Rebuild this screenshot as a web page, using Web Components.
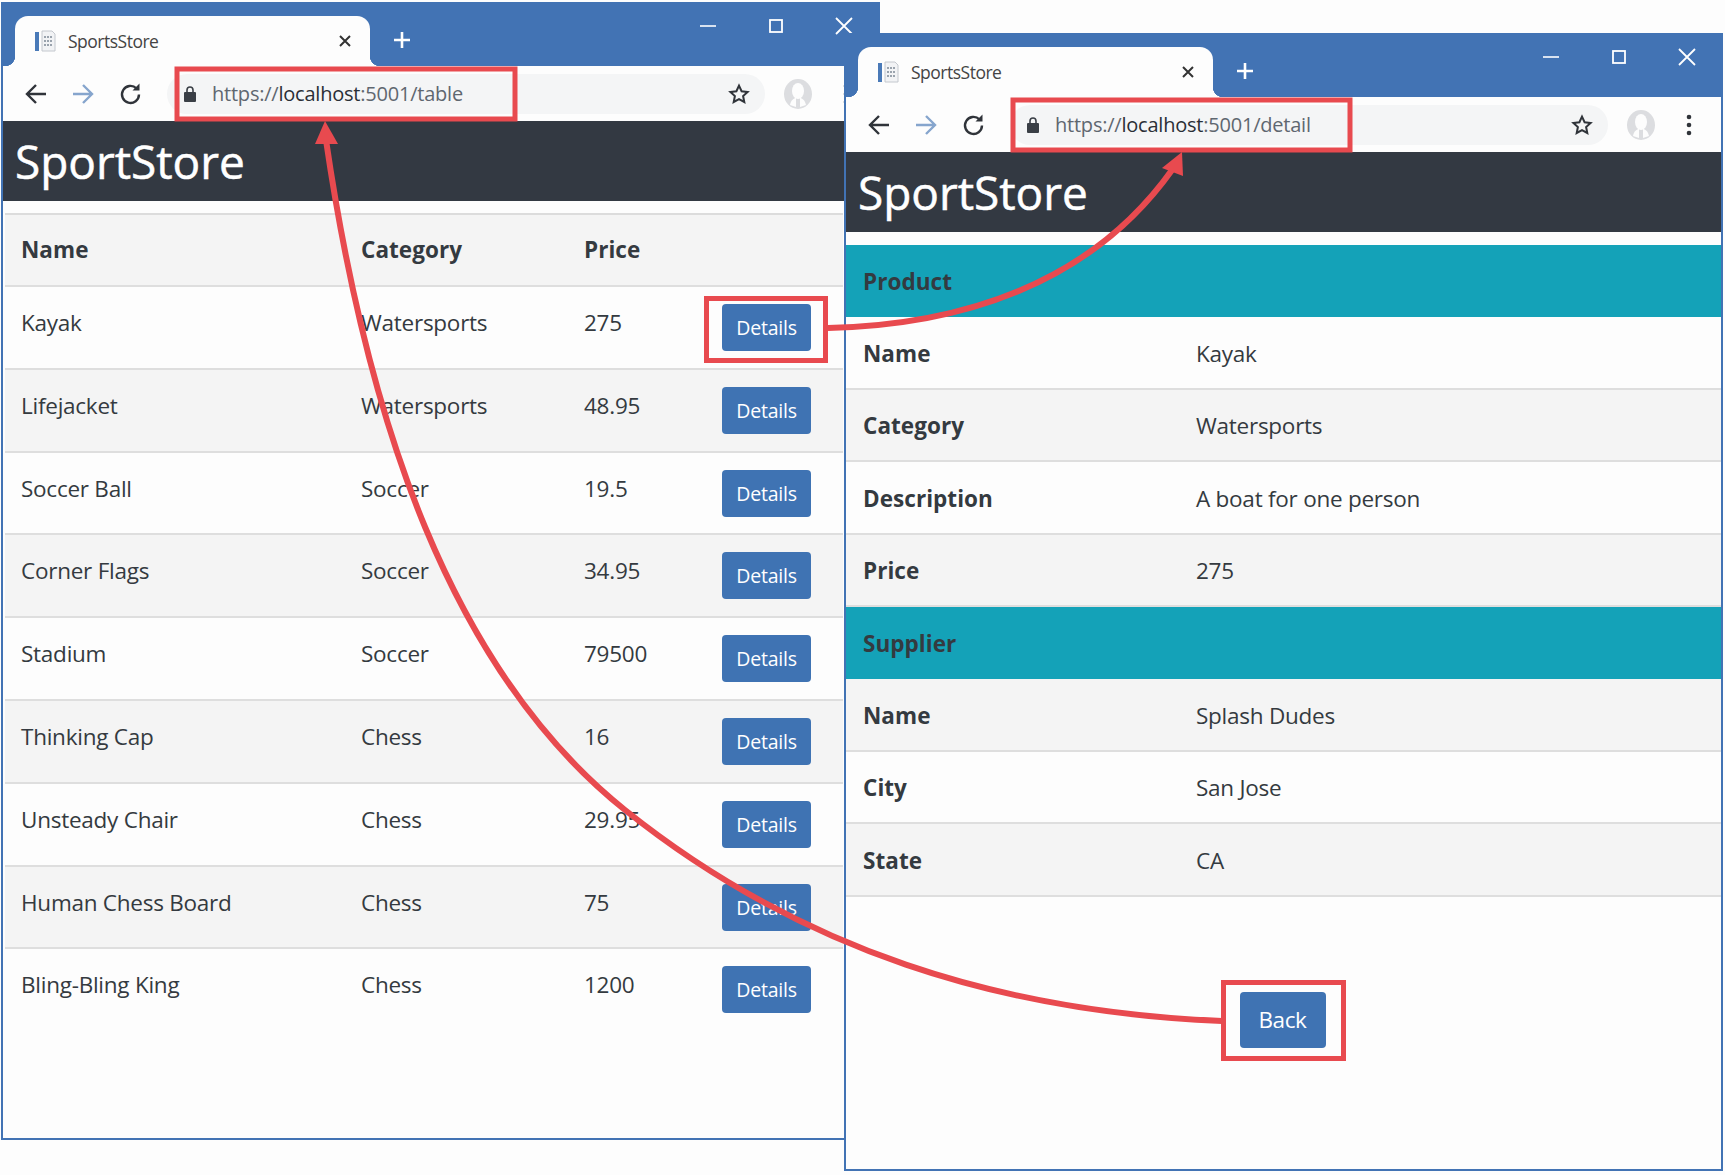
<!DOCTYPE html>
<html>
<head>
<meta charset="utf-8">
<title>SportsStore</title>
<style>
  html, body { margin: 0; background: #fdfdfd; }
  body { position: relative; width: 1725px; height: 1175px; overflow: hidden; font-family: "Open Sans", "Noto Sans", sans-serif; color: #343a40; }
</style>
</head>
<body>

<browser-window url-path="/table" style="left:1px;top:2px;width:879px;height:1138px;">
  <store-header></store-header>
  <div style="height:12px"></div>
  <product-table>
    <product-row head name="Name" cat="Category" price="Price"></product-row>
    <product-row name="Kayak" cat="Watersports" price="275"></product-row>
    <product-row shade name="Lifejacket" cat="Watersports" price="48.95"></product-row>
    <product-row name="Soccer Ball" cat="Soccer" price="19.5"></product-row>
    <product-row shade name="Corner Flags" cat="Soccer" price="34.95"></product-row>
    <product-row name="Stadium" cat="Soccer" price="79500"></product-row>
    <product-row shade name="Thinking Cap" cat="Chess" price="16"></product-row>
    <product-row name="Unsteady Chair" cat="Chess" price="29.95"></product-row>
    <product-row shade name="Human Chess Board" cat="Chess" price="75"></product-row>
    <product-row name="Bling-Bling King" cat="Chess" price="1200"></product-row>
  </product-table>
</browser-window>

<browser-window url-path="/detail" style="left:844px;top:33px;width:879px;height:1138px;">
  <store-header></store-header>
  <div style="height:13px"></div>
  <detail-row band label="Product"></detail-row>
  <detail-row label="Name" value="Kayak"></detail-row>
  <detail-row shade label="Category" value="Watersports"></detail-row>
  <detail-row label="Description" value="A boat for one person"></detail-row>
  <detail-row shade label="Price" value="275"></detail-row>
  <detail-row band label="Supplier"></detail-row>
  <detail-row shade label="Name" value="Splash Dudes"></detail-row>
  <detail-row label="City" value="San Jose"></detail-row>
  <detail-row shade label="State" value="CA"></detail-row>
  <back-bar></back-bar>
</browser-window>

<arrow-layer></arrow-layer>

<template id="window-tpl">
  <style>
    :host { display: flex; flex-direction: column; position: absolute; box-sizing: border-box; border: 2px solid #4273b4; border-top: 0; background: #fdfdfd; }
    .title { display: flex; height: 64px; background: #4273b4; box-sizing: border-box; padding-top: 14px; padding-left: 12px; flex: none; }
    .tab { position: relative; display: flex; align-items: center; width: 355px; height: 50px; box-sizing: border-box; padding: 0 18px 0 18px; background: #fdfdfd; border-radius: 13px 13px 0 0; font-size: 17.5px; letter-spacing: -.5px; color: #444; }
    .tab::before, .tab::after { content: ""; position: absolute; bottom: 0; width: 10px; height: 10px; }
    .tab::before { left: -10px; background: radial-gradient(circle at 0 0, #4273b4 10px, #fdfdfd 10.5px); }
    .tab::after { right: -10px; background: radial-gradient(circle at 100% 0, #4273b4 10px, #fdfdfd 10.5px); }
    .fav { margin-right: 11px; }
    .tab span { flex: 1; }
    .plus { margin: 14px 0 0 22px; }
    .ctrls { margin-left: auto; display: flex; width: 204px; }
    .ctrls svg { width: 68px; height: 24px; margin-top: -2px; }
    .bar { display: flex; align-items: center; height: 55px; flex: none; padding-left: 10px; box-sizing: border-box; background: #fdfdfd; }
    .nav { width: 47px; height: 28px; flex: none; }
    .omni { display: flex; align-items: center; width: 598px; height: 40px; margin-left: 13px; box-sizing: border-box; padding: 0 15px 0 17px; border-radius: 20px; background: #f4f5f6; font-size: 20px; letter-spacing: -.22px; color: #5f6770; }
    .omni b { font-weight: 400; color: #2a2f36; }
    .lock { margin-right: 16px; flex: none; }
    .star { margin-left: auto; flex: none; }
    .avatar { margin-left: 19px; flex: none; }
    .kebab { margin-left: 31px; flex: none; }
    .page { flex: 1; display: flex; flex-direction: column; min-height: 0; }
  </style>
  <div class="title">
    <div class="tab">
      <svg class="fav" width="24" height="24" viewBox="0 0 24 24"><path d="M9 2h10l3 3v17H9z" fill="#f2f3f5" stroke="#c4c8ce"/><rect x="2" y="3" width="4" height="19" fill="#4a7ab8"/><path d="M11 8h8M11 12h8M11 16h8" stroke="#9aa3ad" stroke-width="2" stroke-dasharray="2 1"/></svg>
      <span>SportsStore</span>
      <svg width="14" height="14" viewBox="0 0 14 14"><path d="M2 2l10 10M12 2L2 12" stroke="#333" stroke-width="2"/></svg>
    </div>
    <svg class="plus" width="20" height="20" viewBox="0 0 20 20"><path d="M10 2v16M2 10h16" stroke="#fff" stroke-width="2.6"/></svg>
    <div class="ctrls">
      <svg viewBox="0 0 68 24"><path d="M26 12h16" stroke="#fff" stroke-width="1.6"/></svg>
      <svg viewBox="0 0 68 24"><rect x="28" y="6" width="12" height="12" fill="none" stroke="#fff" stroke-width="1.8"/></svg>
      <svg viewBox="0 0 68 24"><path d="M26 4l16 16M42 4L26 20" stroke="#fff" stroke-width="1.8"/></svg>
    </div>
  </div>
  <div class="bar">
    <svg class="nav" viewBox="0 0 47 28"><path d="M33 14H15M23 5l-9 9 9 9" fill="none" stroke="#30343a" stroke-width="2.4"/></svg>
    <svg class="nav" viewBox="0 0 47 28"><path d="M13 14h18M23 5l9 9-9 9" fill="none" stroke="#86a5cd" stroke-width="2.4"/></svg>
    <svg class="nav" viewBox="0 0 47 28"><path d="M32 14.5a8.5 8.5 0 1 1-2.6-6.2" fill="none" stroke="#30343a" stroke-width="2.4"/><path d="M32.500 3.500v7h-7z" fill="#30343a"/></svg>
    <div class="omni">
      <svg class="lock" width="12" height="16" viewBox="0 0 12 16"><rect x="0" y="6" width="12" height="10" rx="1" fill="#3a3f46"/><path d="M3 6.5V4a3 3 0 0 1 6 0v2.5" fill="none" stroke="#3a3f46" stroke-width="1.6"/></svg>
      <div>https://<b>localhost</b><span id="path"></span></div>
      <svg class="star" width="22" height="22" viewBox="0 0 22 22"><path d="M11 2.6l2.6 5.6 6 .7-4.5 4.1 1.2 6L11 16.100l-5.300 2.900 1.200-6L2.400 8.900l6-.7z" fill="none" stroke="#30343a" stroke-width="2"/></svg>
    </div>
    <svg class="avatar" width="28" height="30" viewBox="0 0 28 30"><ellipse cx="14" cy="15" rx="14" ry="15" fill="#dcdde0"/><ellipse cx="14" cy="12" rx="6" ry="8" fill="#fdfdfd"/><path d="M6 26c1-5 4-7 6-7v9zM22 26c-1-5-4-7-6-7v9z" fill="#fdfdfd"/></svg>
    <svg class="kebab" width="6" height="22" viewBox="0 0 6 22"><circle cx="3" cy="3" r="2.300" fill="#30343a"/><circle cx="3" cy="11" r="2.300" fill="#30343a"/><circle cx="3" cy="19" r="2.300" fill="#30343a"/></svg>
  </div>
  <div class="page"><slot></slot></div>
</template>

<script>
function shadowFrom(el, html) {
  el.attachShadow({mode: 'open'});
  el.shadowRoot.innerHTML = html;
}

class BrowserWindow extends HTMLElement {
  constructor() {
    super();
    this.attachShadow({mode: 'open'});
    this.shadowRoot.appendChild(document.getElementById('window-tpl').content.cloneNode(true));
  }
  connectedCallback() {
    this.shadowRoot.querySelector('#path').textContent = ':5001' + this.getAttribute('url-path');
  }
}
customElements.define('browser-window', BrowserWindow);

class StoreHeader extends HTMLElement {
  constructor() {
    super();
    shadowFrom(this, `
      <style>
        :host { display: flex; align-items: center; height: 80px; flex: none; box-sizing: border-box; padding-left: 12px; background: #333942; color: #fff; font-size: 46px; font-weight: 500; letter-spacing: -.05px; -webkit-text-stroke: .5px #fff; }
      </style>
      <span>SportStore</span>`);
  }
}
customElements.define('store-header', StoreHeader);

class ProductTable extends HTMLElement {
  constructor() {
    super();
    shadowFrom(this, `
      <style>
        :host { display: block; margin: 0 0 0 2px; border-top: 2px solid #dcdcdc; width: 838px; }
      </style>
      <slot></slot>`);
  }
}
customElements.define('product-table', ProductTable);

class ProductRow extends HTMLElement {
  constructor() {
    super();
    this.attachShadow({mode: 'open'});
  }
  connectedCallback() {
    var head = this.hasAttribute('head');
    this.shadowRoot.innerHTML = `
      <style>
        :host { display: grid; grid-template-columns: 340px 223px 138px 1fr; box-sizing: border-box; height: ${head ? 72 : 82.8}px; padding: ${head ? 20 : 21}px 0 0 16px; border-bottom: 2px solid #dedede; font-size: 22.500px; letter-spacing: -.25px; color: #343a40; }
        :host([shade]), :host([head]) { background: #f4f4f4; }
        :host([head]) { font-weight: 700; letter-spacing: .05px; }
        .cell { line-height: 30px; white-space: nowrap; }
        .btn { margin-top: -4px; }
        :host(:last-child) { border-bottom: 0; }
      </style>
      <div class="cell">${this.getAttribute('name')}</div>
      <div class="cell">${this.getAttribute('cat')}</div>
      <div class="cell">${this.getAttribute('price')}</div>
      ${head ? '' : '<blue-button class="btn">Details</blue-button>'}`;
  }
}
customElements.define('product-row', ProductRow);

class BlueButton extends HTMLElement {
  constructor() {
    super();
    shadowFrom(this, `
      <style>
        :host { display: inline-flex; align-items: center; justify-content: center; box-sizing: border-box; width: 89px; height: 47px; background: #3f73b3; border-radius: 4px; color: #fff; font-size: 19.500px; letter-spacing: -.2px; }
        :host([big]) { width: 86px; height: 56px; font-size: 22.500px; letter-spacing: -.4px; }
      </style>
      <slot></slot>`);
  }
}
customElements.define('blue-button', BlueButton);

class DetailRow extends HTMLElement {
  constructor() {
    super();
    this.attachShadow({mode: 'open'});
  }
  connectedCallback() {
    this.shadowRoot.innerHTML = `
      <style>
        :host { display: grid; grid-template-columns: 333px 1fr; align-items: center; box-sizing: border-box; height: 72.400px; padding: 2px 0 0 17px; border-bottom: 2px solid #dedede; font-size: 22.500px; letter-spacing: -.25px; color: #343a40; }
        :host([shade]) { background: #f4f4f4; }
        :host([band]) { background: #14a2b8; border-bottom: 0; padding-top: 0; }
        .k { font-weight: 700; letter-spacing: .05px; }
      </style>
      <div class="k">${this.getAttribute('label')}</div>
      <div>${this.getAttribute('value') || ''}</div>`;
  }
}
customElements.define('detail-row', DetailRow);

class BackBar extends HTMLElement {
  constructor() {
    super();
    shadowFrom(this, `
      <style>
        :host { display: flex; justify-content: center; padding: 95px 0 0 0; }
        blue-button { margin-left: -2px; }
      </style>
      <blue-button big>Back</blue-button>`);
  }
}
customElements.define('back-bar', BackBar);

class ArrowLayer extends HTMLElement {
  constructor() {
    super();
    shadowFrom(this, `
      <style>
        :host { display: block; position: absolute; left: 0; top: 0; width: 1725px; height: 1175px; pointer-events: none; }
        svg { display: block; }
        rect, path.line { fill: none; stroke: #e84a4f; }
        rect { stroke-width: 5; }
        path.line { stroke-width: 6; }
        path.head { fill: #e84a4f; }
      </style>
      <svg width="1725" height="1175" viewBox="0 0 1725 1175">
        <rect x="177" y="69" width="338" height="50"/>
        <rect x="1013" y="100" width="337" height="50"/>
        <rect x="706.500" y="298.500" width="119" height="62"/>
        <rect x="1223.500" y="982.500" width="120" height="76"/>
        <path class="line" d="M1222 1021C1000 1012 800 950 625 810C450 670 367 420 326 140"/>
        <path class="head" d="M325 121L338 144L315 144Z"/>
        <path class="line" d="M828 328C960 325 1090 285 1172 170"/>
        <path class="head" d="M1182 152L1183 176L1162 168Z"/>
      </svg>`);
  }
}
customElements.define('arrow-layer', ArrowLayer);
</script>
</body>
</html>
